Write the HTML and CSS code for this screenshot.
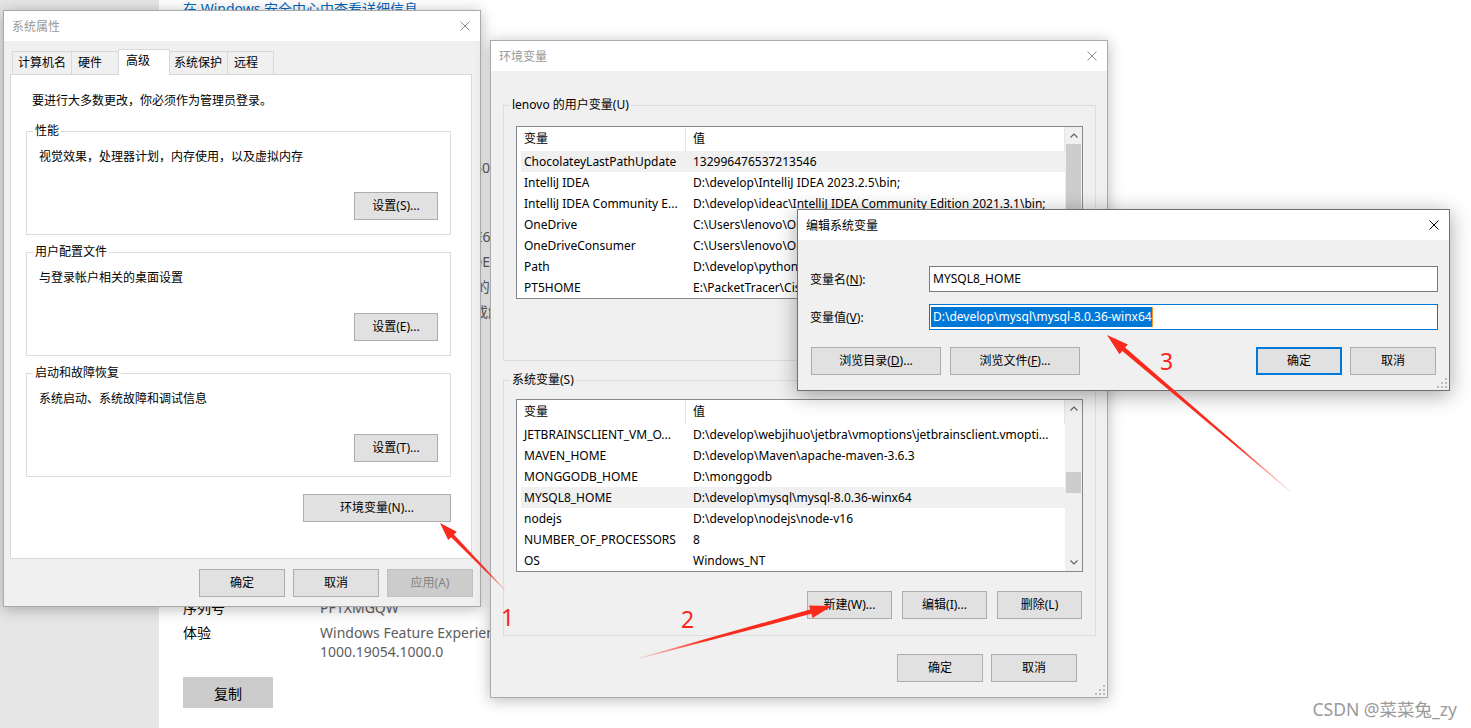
FILE: index.html
```html
<!DOCTYPE html>
<html lang="zh-CN">
<head>
<meta charset="utf-8">
<title>环境变量</title>
<link rel="stylesheet" href="styles.css">
</head>
<body>
<div class="desktop">
  <aside class="side"></aside>
  <main class="about">
    <a class="link">在 Windows 安全中心中查看详细信息</a>
    <div class="spec spec-device">
      <div class="row"><span class="k">设备名称</span><span class="v">LAPTOP-D8VH5G3J</span></div>
      <div class="row"><span class="k">处理器</span><span class="v">Intel(R) Core(TM) i7-10750H CPU @<br>2.60GHz   2.59 GHz</span></div>
      <div class="row"><span class="k">机带 RAM</span><span class="v">16.0 GB (15.8 GB 可用)</span></div>
      <div class="row"><span class="k">设备 ID</span><span class="v">5C0A8F21-7B3E-4D9A-9E61-2F4C7D8B1A03</span></div>
      <div class="row"><span class="k">产品 ID</span><span class="v">00342-35874-69147-AAOEM</span></div>
      <div class="row"><span class="k">系统类型</span><span class="v">64 位操作系统, 基于 x64 的处理器</span></div>
      <div class="row"><span class="k">笔和触控</span><span class="v">没有可用于此显示器的笔或触控输入</span></div>
    </div>
    <div class="spec spec-win">
      <div class="row"><span class="k">序列号</span><span class="v">PF1XMGQW</span></div>
      <div class="row"><span class="k">体验</span><span class="v">Windows Feature Experience Pack<br>1000.19054.1000.0</span></div>
    </div>
    <button class="copy">复制</button>
  </main>

  <!-- 系统属性 -->
  <section class="win w1">
    <div class="titlebar"><span class="t">系统属性</span>
      <svg class="close" viewBox="0 0 10 10"><path d="M0.5 0.5L9.5 9.5M9.5 0.5L0.5 9.5" stroke="#8c8c8c" stroke-width="1"/></svg>
    </div>
    <div class="body">
      <div class="tabs">
        <div class="tab tab1">计算机名</div>
        <div class="tab tab2">硬件</div>
        <div class="tab tab3 active">高级</div>
        <div class="tab tab4">系统保护</div>
        <div class="tab tab5">远程</div>
      </div>
      <div class="panel">
        <div class="intro">要进行大多数更改，你必须作为管理员登录。</div>
        <div class="grp">
          <div class="glabel">性能</div>
          <div class="gdesc">视觉效果，处理器计划，内存使用，以及虚拟内存</div>
          <button class="btn gbtn">设置(S)...</button>
        </div>
        <div class="grp">
          <div class="glabel">用户配置文件</div>
          <div class="gdesc">与登录帐户相关的桌面设置</div>
          <button class="btn gbtn">设置(E)...</button>
        </div>
        <div class="grp">
          <div class="glabel">启动和故障恢复</div>
          <div class="gdesc">系统启动、系统故障和调试信息</div>
          <button class="btn gbtn">设置(T)...</button>
        </div>
        <button class="btn envbtn">环境变量(N)...</button>
      </div>
      <div class="foot">
        <button class="btn">确定</button>
        <button class="btn">取消</button>
        <button class="btn disabled">应用(A)</button>
      </div>
    </div>
  </section>

  <!-- 环境变量 -->
  <section class="win w2">
    <div class="titlebar"><span class="t">环境变量</span>
      <svg class="close" viewBox="0 0 10 10"><path d="M0.5 0.5L9.5 9.5M9.5 0.5L0.5 9.5" stroke="#8c8c8c" stroke-width="1"/></svg>
    </div>
    <div class="body">
      <div class="grp2 user">
        <div class="glabel">lenovo 的用户变量(U)</div>
        <div class="list">
          <div class="lbody">
            <div class="lhead"><span>变量</span><span>值</span></div>
            <div class="lrow hl"><span>ChocolateyLastPathUpdate</span><span>132996476537213546</span></div>
            <div class="lrow"><span>IntelliJ IDEA</span><span>D:\develop\IntelliJ IDEA 2023.2.5\bin;</span></div>
            <div class="lrow"><span>IntelliJ IDEA Community E...</span><span>D:\develop\ideac\IntelliJ IDEA Community Edition 2021.3.1\bin;</span></div>
            <div class="lrow"><span>OneDrive</span><span>C:\Users\lenovo\OneDrive</span></div>
            <div class="lrow"><span>OneDriveConsumer</span><span>C:\Users\lenovo\OneDrive</span></div>
            <div class="lrow"><span>Path</span><span>D:\develop\python\Scripts\;D:\develop\python\;</span></div>
            <div class="lrow"><span>PT5HOME</span><span>E:\PacketTracer\Cisco Packet Tracer 8.2.1</span></div>
          </div>
          <div class="sb">
            <div class="arr"><svg width="8" height="5" viewBox="0 0 8 5"><path d="M0.5 4.5L4 1L7.5 4.5" fill="none" stroke="#606060" stroke-width="1.2"/></svg></div>
            <div class="track"><div class="thumb"></div></div>
            <div class="arr"><svg width="8" height="5" viewBox="0 0 8 5"><path d="M0.5 0.5L4 4L7.5 0.5" fill="none" stroke="#606060" stroke-width="1.2"/></svg></div>
          </div>
        </div>
      </div>
      <div class="grp2 sys">
        <div class="glabel">系统变量(S)</div>
        <div class="list">
          <div class="lbody">
            <div class="lhead"><span>变量</span><span>值</span></div>
            <div class="lrow"><span>JETBRAINSCLIENT_VM_O...</span><span>D:\develop\webjihuo\jetbra\vmoptions\jetbrainsclient.vmopti...</span></div>
            <div class="lrow"><span>MAVEN_HOME</span><span>D:\develop\Maven\apache-maven-3.6.3</span></div>
            <div class="lrow"><span>MONGGODB_HOME</span><span>D:\monggodb</span></div>
            <div class="lrow hl"><span>MYSQL8_HOME</span><span>D:\develop\mysql\mysql-8.0.36-winx64</span></div>
            <div class="lrow"><span>nodejs</span><span>D:\develop\nodejs\node-v16</span></div>
            <div class="lrow"><span>NUMBER_OF_PROCESSORS</span><span>8</span></div>
            <div class="lrow"><span>OS</span><span>Windows_NT</span></div>
          </div>
          <div class="sb">
            <div class="arr"><svg width="8" height="5" viewBox="0 0 8 5"><path d="M0.5 4.5L4 1L7.5 4.5" fill="none" stroke="#606060" stroke-width="1.2"/></svg></div>
            <div class="track"><div class="thumb"></div></div>
            <div class="arr"><svg width="8" height="5" viewBox="0 0 8 5"><path d="M0.5 0.5L4 4L7.5 0.5" fill="none" stroke="#606060" stroke-width="1.2"/></svg></div>
          </div>
        </div>
        <div class="sysbtns">
          <button class="btn">新建(W)...</button>
          <button class="btn">编辑(I)...</button>
          <button class="btn">删除(L)</button>
        </div>
      </div>
      <div class="foot2">
        <button class="btn">确定</button>
        <button class="btn">取消</button>
      </div>
      <svg class="grip" width="10" height="10" viewBox="0 0 10 10"><g fill="#bcbcbc"><rect x="8" y="0" width="2" height="2"/><rect x="4" y="4" width="2" height="2"/><rect x="8" y="4" width="2" height="2"/><rect x="0" y="8" width="2" height="2"/><rect x="4" y="8" width="2" height="2"/><rect x="8" y="8" width="2" height="2"/></g></svg>
    </div>
  </section>

  <!-- 编辑系统变量 -->
  <section class="win w3">
    <div class="titlebar"><span class="t">编辑系统变量</span>
      <svg class="close" viewBox="0 0 10 10"><path d="M0.5 0.5L9.5 9.5M9.5 0.5L0.5 9.5" stroke="#000" stroke-width="1"/></svg>
    </div>
    <div class="body">
      <div class="field"><span class="flabel">变量名(<u>N</u>):</span><div class="input">MYSQL8_HOME</div></div>
      <div class="field"><span class="flabel">变量值(<u>V</u>):</span><div class="input focus"><span class="sel">D:\develop\mysql\mysql-8.0.36-winx64</span></div></div>
      <div class="btnrow">
        <button class="btn wide">浏览目录(<u>D</u>)...</button>
        <button class="btn wide">浏览文件(<u>F</u>)...</button>
        <span class="spacer"></span>
        <button class="btn default">确定</button>
        <button class="btn">取消</button>
      </div>
      <svg class="grip" width="10" height="10" viewBox="0 0 10 10"><g fill="#bcbcbc"><rect x="8" y="0" width="2" height="2"/><rect x="4" y="4" width="2" height="2"/><rect x="8" y="4" width="2" height="2"/><rect x="0" y="8" width="2" height="2"/><rect x="4" y="8" width="2" height="2"/><rect x="8" y="8" width="2" height="2"/></g></svg>
    </div>
  </section>

  <svg class="marks" width="1471" height="728" viewBox="0 0 1471 728">
    <defs>
      <linearGradient id="g1" gradientUnits="userSpaceOnUse" x1="505" y1="590" x2="440" y2="523">
        <stop offset="0" stop-color="#fa2a1c" stop-opacity="0.2"/>
        <stop offset="0.3" stop-color="#fa2a1c" stop-opacity="1"/>
      </linearGradient>
      <linearGradient id="g2" gradientUnits="userSpaceOnUse" x1="640" y1="658" x2="832" y2="606">
        <stop offset="0" stop-color="#fa2a1c" stop-opacity="0.1"/>
        <stop offset="0.35" stop-color="#fa2a1c" stop-opacity="1"/>
      </linearGradient>
      <linearGradient id="g3" gradientUnits="userSpaceOnUse" x1="1291" y1="492" x2="1107" y2="335">
        <stop offset="0" stop-color="#fa2a1c" stop-opacity="0.1"/>
        <stop offset="0.3" stop-color="#fa2a1c" stop-opacity="1"/>
      </linearGradient>
    </defs>
    <polygon fill="url(#g1)" points="505.2,589.8 453.9,534.5 456.8,531.7 440,523 448.2,540.1 451.1,537.3 504.8,590.2"/>
    <polygon fill="url(#g2)" points="640.1,658.4 811.4,613.8 812.5,618.0 832,606 809.1,605.4 810.2,609.6 639.9,657.6"/>
    <polygon fill="url(#g3)" points="1291.3,491.7 1125.1,347.6 1127.9,344.4 1107,335 1119.5,354.2 1122.3,351.0 1290.7,492.3"/>
    <text class="num" x="501" y="626">1</text>
    <text class="num" x="681" y="628">2</text>
    <text class="num" x="1160" y="370">3</text>
  </svg>

  <div class="watermark">CSDN @菜菜兔_zy</div>
</div>
</body>
</html>
```

FILE: styles.css
```css
* { box-sizing: border-box; margin: 0; padding: 0; }
html, body { width: 1471px; height: 728px; overflow: hidden; }
body {
  font-family: "Noto Sans", "Noto Sans CJK SC", sans-serif;
  font-size: 12px;
  color: #000;
  background: #fff;
}
button { font: inherit; color: inherit; }

.desktop { position: relative; width: 1471px; height: 728px; display: flex; overflow: hidden; }

/* background settings page */
.side { width: 159px; flex: none; background: #e6e6e6; }
.about { flex: 1; padding-left: 24px; font-size: 14px; background: #fff; }
.link { display: block; color: #0067c0; line-height: 16px; margin-top: 1px; white-space: nowrap; }
.spec-device { margin-top: 116px; }
.spec-win { margin-top: 277px; }
.row { display: grid; grid-template-columns: 137px auto; line-height: 19px; margin-bottom: 6px; white-space: nowrap; }
.k { color: #000; }
.v { color: #5d5d5d; }
.copy { display: block; margin-top: 16px; width: 90px; height: 31px; border: none; background: #cccccc; font-size: 14px; }

/* windows */
.win {
  position: absolute;
  display: flex;
  flex-direction: column;
  background: #f0f0f0;
  border: 1px solid #aaaaaa;
  box-shadow: 0 2px 14px rgba(0, 0, 0, 0.28);
}
.w1 { left: 3px; top: 10px; width: 478px; height: 597px; z-index: 1; }
.w2 { left: 490px; top: 40px; width: 618px; height: 658px; z-index: 2; }
.w3 { left: 797px; top: 209px; width: 653px; height: 182px; z-index: 3; border-color: #707070; box-shadow: 0 4px 20px rgba(0, 0, 0, 0.35); }

.titlebar { height: 30px; flex: none; background: #fff; display: flex; align-items: center; padding-left: 8px; color: #999; }
.titlebar .t { flex: 1; }
.w3 .titlebar { color: #000; }
.close { width: 10px; height: 10px; margin-right: 10px; flex: none; }

.body { flex: 1; display: flex; flex-direction: column; position: relative; }

.btn {
  height: 28px;
  border: 1px solid #adadad;
  background: #e1e1e1;
  text-align: center;
  line-height: 26px;
  white-space: nowrap;
}
.btn.disabled { background: #cccccc; border-color: #bfbfbf; color: #838383; }
.btn.default { border: 2px solid #0078d7; line-height: 24px; }

/* dialog 1 */
.w1 .body { padding: 8px 8px 0 6px; }
.tabs { display: flex; align-items: flex-end; height: 25px; padding-left: 2px; flex: none; }
.tab {
  height: 23px;
  border: 1px solid #d9d9d9;
  border-bottom: none;
  margin-left: -1px;
  padding-left: 6px;
  line-height: 21px;
  background: #f0f0f0;
  white-space: nowrap;
}
.tab1 { margin-left: 0; width: 60px; padding-left: 5px; }
.tab2 { width: 49px; }
.tab3 { width: 52px; margin-left: -2px; padding-left: 7px; }
.tab4 { width: 59px; padding-left: 4px; }
.tab5 { width: 47px; }
.tab.active { height: 26px; margin-bottom: -1px; background: #fff; position: relative; z-index: 1; line-height: 22px; }

.panel {
  height: 485px;
  flex: none;
  background: #fff;
  border: 1px solid #d9d9d9;
  padding: 18px 20px 0 15px;
  display: flex;
  flex-direction: column;
}
.intro { line-height: 16px; margin-left: 6px; }
.grp { border: 1px solid #dcdcdc; margin-top: 22px; display: flex; flex-direction: column; }
.grp + .grp { margin-top: 17px; }
.glabel { align-self: flex-start; margin: -8px 0 0 6px; padding: 0 2px; line-height: 14px; background: #fff; white-space: nowrap; }
.gdesc { margin: 11px 0 0 12px; line-height: 16px; }
.gbtn { align-self: flex-end; margin: 27px 12px 14px 0; width: 84px; }
.envbtn { align-self: flex-end; margin-top: 17px; width: 148px; }

.foot { display: flex; justify-content: flex-end; gap: 8px; margin: 10px -1px 0 0; }
.foot .btn { width: 86px; }

/* dialog 2 */
.w2 .body { padding: 34px 11px 0 12px; }
.grp2 { border: 1px solid #dcdcdc; display: flex; flex-direction: column; }
.grp2 .glabel { background: #f0f0f0; }
.user { padding-bottom: 61px; }
.sys { margin-top: 19px; padding-bottom: 16px; }

.list { display: flex; border: 1px solid #828790; background: #fff; margin: 14px 12px 0; height: 173px; }
.sys .list { margin-top: 12px; }
.lbody { flex: 1; overflow: hidden; }
.lhead { display: grid; grid-template-columns: 169px 1fr; height: 24px; line-height: 24px; white-space: nowrap; }
.lhead span { padding-left: 7px; border-right: 1px solid #e5e5e5; }
.lrow { display: grid; grid-template-columns: 165px 1fr; height: 21px; line-height: 21px; margin-left: 4px; white-space: nowrap; }
.lrow span { overflow: hidden; }
.lrow span:first-child { padding-left: 3px; }
.lrow span:last-child { padding-left: 7px; }
.lrow.hl { background: #f0f0f0; }

.sb { width: 17px; flex: none; background: #f0f0f0; display: flex; flex-direction: column; }
.sb .arr { height: 17px; flex: none; display: flex; align-items: center; justify-content: center; }
.sb .track { flex: 1; }
.thumb { margin: 0 1px; background: #cdcdcd; }
.user .thumb { height: 110px; }
.sys .thumb { margin-top: 55px; height: 21px; }

.sysbtns { display: flex; justify-content: flex-end; gap: 10px; margin: 19px 13px 0 0; }
.sysbtns .btn { width: 85px; }

.foot2 { display: flex; justify-content: flex-end; gap: 8px; margin: 18px 19px 0 0; }
.foot2 .btn { width: 86px; }

.grip { position: absolute; right: 2px; bottom: 2px; }

/* dialog 3 */
.w3 .body { padding: 26px 11px 0 12px; }
.field { display: flex; align-items: center; height: 26px; }
.field + .field { margin-top: 12px; }
.flabel { width: 119px; flex: none; white-space: nowrap; }
.input { width: 509px; height: 26px; border: 1px solid #7a7a7a; background: #fff; padding-left: 3px; line-height: 24px; white-space: nowrap; }
.input.focus { border-color: #0078d7; padding: 2px 0 0 1px; line-height: 20px; }
.sel { display: inline-block; background: #0078d7; color: #fff; padding-left: 2px; line-height: 20px; border-right: 1px solid #f7931e; vertical-align: top; }
.btnrow { display: flex; margin: 17px 2px 0 1px; }
.btnrow .btn { width: 86px; }
.btnrow .btn.wide { width: 130px; }
.btnrow .btn + .btn { margin-left: 9px; }
.btnrow .default + .btn { margin-left: 8px; }
.spacer { flex: 1; }

/* annotations */
.marks { position: absolute; left: 0; top: 0; z-index: 5; pointer-events: none; }
.num { font-family: "Noto Sans", sans-serif; font-weight: 400; font-size: 23px; fill: #f8261a; }
.watermark {
  position: absolute;
  right: 14px;
  bottom: 7px;
  z-index: 6;
  font-size: 17.5px;
  color: #9a9a9a;
  text-shadow: 0 0 2px #fff;
  white-space: nowrap;
}
```
